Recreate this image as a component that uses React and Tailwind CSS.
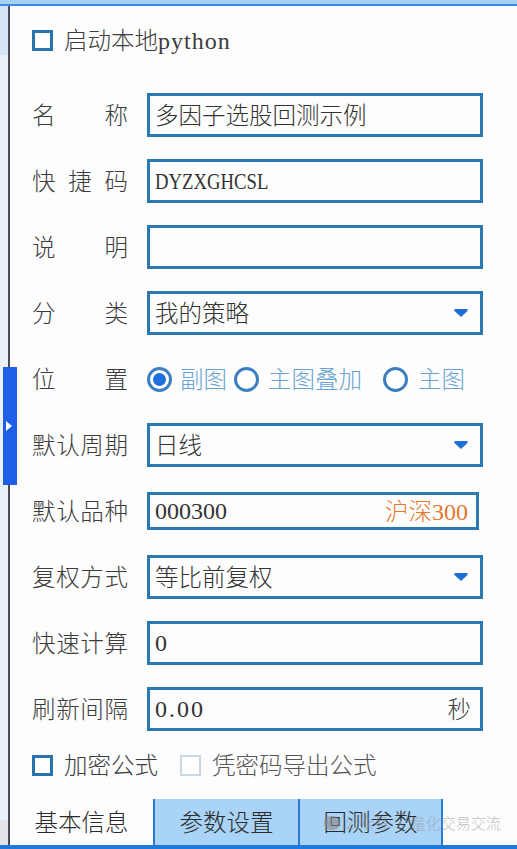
import React from "react";

const CJK = "font-['Noto_Sans_CJK_SC','Noto_Sans_CJK_JP',sans-serif]";
const LAT = "font-['Liberation_Serif','Noto_Sans_CJK_SC',serif] text-[24px]";

function Label({ chars }) {
  return (
    <div className="w-[96px] flex justify-between text-[#3c3c3c] shrink-0">
      {chars.map((c, i) => (
        <span key={i}>{c}</span>
      ))}
    </div>
  );
}

function Arrow() {
  return (
    <svg width="14" height="8" viewBox="0 0 14 8" className="shrink-0">
      <path d="M0.5 0 H13.5 V2 L7 8 L0.5 2 Z" fill="#1d6fd6" />
    </svg>
  );
}

function Box({ children, h = "h-[44px]", w = "w-[336px]" }) {
  return (
    <div
      className={`${h} ${w} border-[3px] border-[#2b79b3] bg-[#fdfdfd] flex items-center pl-[5px] pr-[12px] text-[#333]`}
    >
      {children}
    </div>
  );
}

function Row({ label, children }) {
  return (
    <div className="h-[44px] flex items-center gap-[19px]">
      <Label chars={label} />
      {children}
    </div>
  );
}

function Radio({ checked }) {
  return (
    <div className="w-[25px] h-[25px] rounded-full border-[3px] border-[#3b7fc0] bg-white flex items-center justify-center shrink-0">
      {checked && <div className="w-[13px] h-[13px] rounded-full bg-[#1f6fe0]" />}
    </div>
  );
}

function Checkbox({ disabled }) {
  return (
    <div
      className={
        disabled
          ? "w-[21px] h-[21px] border-2 border-[#c9d8e3] bg-white shrink-0"
          : "w-[21px] h-[21px] border-[3px] border-[#2a74ae] bg-white shrink-0"
      }
    />
  );
}

export default function App() {
  return (
    <div className={`relative w-[517px] h-[849px] overflow-hidden bg-[#fdfdfd] ${CJK} font-light text-[23.5px] leading-none`}>
      {/* top bar */}
      <div className="h-[4px] bg-[#a6d0f4]" />
      <div className="h-[2px] bg-[#3a8ce0]" />

      <div className="flex h-[839px]">
        {/* left strip */}
        <div className="w-[8px] flex flex-col">
          <div className="h-[49px] bg-[#d5e5f6]" />
          <div className="flex-1 bg-[#eaf0f7]" />
          <div className="h-[25px] bg-[#e2e4e8]" />
        </div>
        <div className="w-[2px] bg-[#4a4a58]" />

        {/* content */}
        <div className="flex-1 flex flex-col">
          <div className="pl-[22px] flex flex-col">
            <div className="mt-[12px] h-[44px] flex items-center gap-[11px] text-[#3c3c3c]">
              <Checkbox />
              <span className="flex items-baseline">
                启动本地<span className={`${LAT} tracking-[1px]`}>python</span>
              </span>
            </div>

            <div className="mt-[31px] flex flex-col gap-[22px]">
              <Row label={["名", "称"]}>
                <Box>多因子选股回测示例</Box>
              </Row>
              <Row label={["快", "捷", "码"]}>
                <Box>
                  <span className={`${LAT} inline-block origin-left scale-x-[0.78]`}>DYZXGHCSL</span>
                </Box>
              </Row>
              <Row label={["说", "明"]}>
                <Box />
              </Row>
              <Row label={["分", "类"]}>
                <Box>
                  <span className="flex-1">我的策略</span>
                  <Arrow />
                </Box>
              </Row>
              <Row label={["位", "置"]}>
                <div className="flex items-center text-[#6aa3d3]">
                  <Radio checked />
                  <span className="ml-[8px]">副图</span>
                  <span className="ml-[7px]"><Radio /></span>
                  <span className="ml-[9px]">主图叠加</span>
                  <span className="ml-[21px]"><Radio /></span>
                  <span className="ml-[10px]">主图</span>
                </div>
              </Row>
              <Row label={["默", "认", "周", "期"]}>
                <Box>
                  <span className="flex-1">日线</span>
                  <Arrow />
                </Box>
              </Row>
              <Row label={["默", "认", "品", "种"]}>
                <Box h="h-[38px]" w="w-[332px]">
                  <span className={`flex-1 ${LAT}`}>000300</span>
                  <span className="text-[#e8772c] flex items-baseline -mr-[4px]">
                    沪深<span className={LAT}>300</span>
                  </span>
                </Box>
              </Row>
              <Row label={["复", "权", "方", "式"]}>
                <Box>
                  <span className="flex-1">等比前复权</span>
                  <Arrow />
                </Box>
              </Row>
              <Row label={["快", "速", "计", "算"]}>
                <Box>
                  <span className={LAT}>0</span>
                </Box>
              </Row>
              <Row label={["刷", "新", "间", "隔"]}>
                <Box>
                  <span className={`flex-1 ${LAT} tracking-[2px]`}>0.00</span>
                  <span className="text-[#444] -mr-[3px]">秒</span>
                </Box>
              </Row>
            </div>

            <div className="mt-[12px] h-[44px] flex items-center text-[#3c3c3c]">
              <Checkbox />
              <span className="ml-[11px]">加密公式</span>
              <span className="ml-[22px]"><Checkbox disabled /></span>
              <span className="ml-[11px] text-[#555]">凭密码导出公式</span>
            </div>
          </div>

          {/* tabs */}
          <div className="mt-[12px] h-[46px] flex">
            <div className="w-[143px] flex items-center justify-center text-[#2a2a2a] bg-[#fdfdfd]">
              基本信息
            </div>
            <div className="w-[145px] flex items-center justify-center bg-[#a9d3f7] border-l-2 border-[#2b7ad4] text-[#2a2a2a]">
              参数设置
            </div>
            <div className="w-[145px] flex items-center justify-center bg-[#a9d3f7] border-l-2 border-r-2 border-[#2b7ad4] text-[#2a2a2a]">
              回测参数
            </div>
          </div>
        </div>
      </div>

      {/* bottom bar */}
      <div className="h-[4px] bg-[#1f78dc]" />

      {/* side handle */}
      <div className="absolute left-[3px] top-[367px] w-[14px] h-[118px] bg-[#1f5fe8] flex items-center justify-center">
        <svg width="7" height="10" viewBox="0 0 7 10" className="-ml-[2px]">
          <path d="M0 0 L6 5 L0 10 Z" fill="#ffffff" />
        </svg>
      </div>

      {/* watermark */}
      <div className="absolute left-[324px] top-[815px] flex items-center gap-[4px] text-[15px] text-[#9a9a9a] opacity-60 pointer-events-none">
        <div className="w-[16px] h-[14px] rounded-full bg-[#888]" />
        <span>公众号 · 量化交易交流</span>
      </div>
    </div>
  );
}
